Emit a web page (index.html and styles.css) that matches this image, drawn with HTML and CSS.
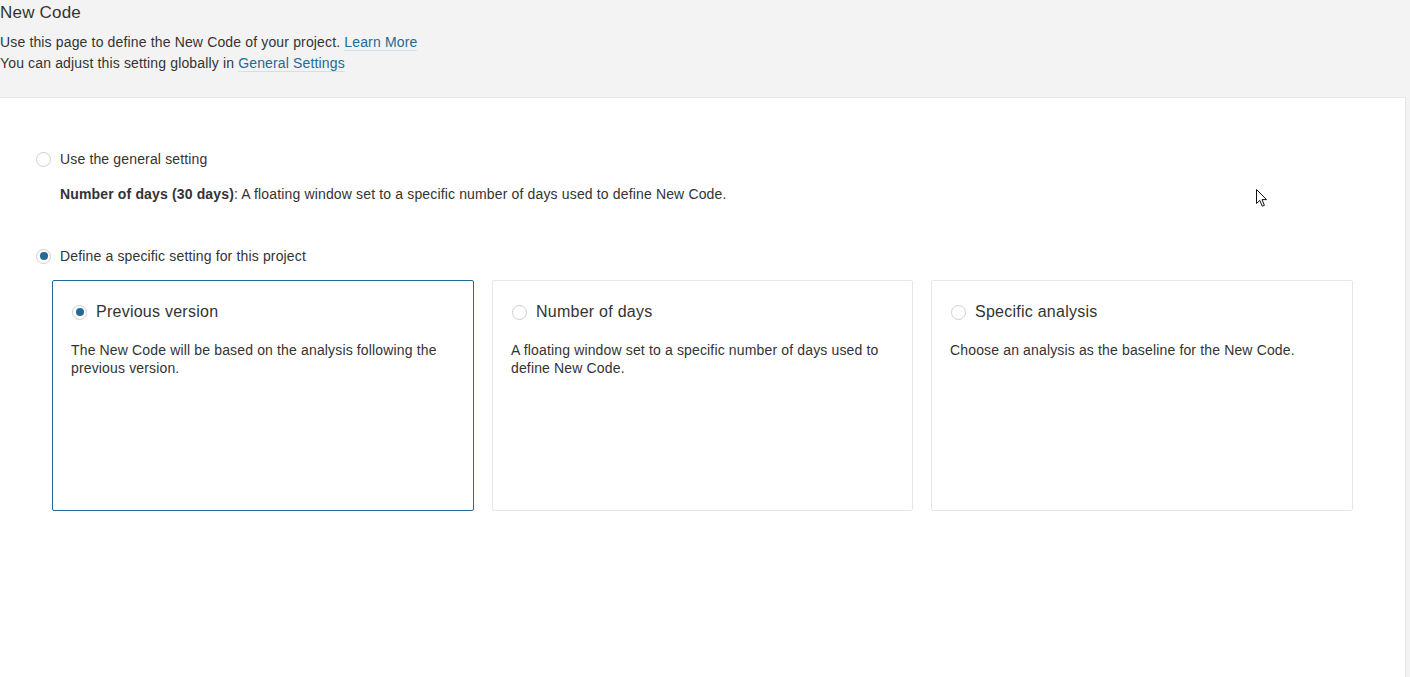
FILE: index.html
```
<!DOCTYPE html>
<html lang="en">

<head>
	<meta charset="utf-8">
	<title>New Code</title>
	<link rel="stylesheet" href="styles.css">
</head>

<body>

	<header class="page-header">
		<h1 class="page-title">New Code</h1>
		<div class="page-description">
			<p>Use this page to define the New Code of your project. <a href="#">Learn More</a></p>
			<p>You can adjust this setting globally in <a href="#">General Settings</a></p>
		</div>
	</header>

	<div class="boxed-group">

		<div class="radio-row">
			<span class="radio"></span>
			<span>Use the general setting</span>
		</div>
		<p class="general-desc"><strong>Number of days (30 days)</strong>: A floating window set to a specific number of days used to define New Code.</p>

		<div class="radio-row specific-row">
			<span class="radio checked"></span>
			<span>Define a specific setting for this project</span>
		</div>

		<div class="choices">
			<div class="choice selected">
				<div class="choice-title">
					<span class="radio checked"></span>
					<span>Previous version</span>
				</div>
				<p>The New Code will be based on the analysis following the previous version.</p>
			</div>
			<div class="choice">
				<div class="choice-title">
					<span class="radio"></span>
					<span>Number of days</span>
				</div>
				<p>A floating window set to a specific number of days used to define New Code.</p>
			</div>
			<div class="choice">
				<div class="choice-title">
					<span class="radio"></span>
					<span>Specific analysis</span>
				</div>
				<p>Choose an analysis as the baseline for the New Code.</p>
			</div>
		</div>

	</div>

	<svg class="cursor" width="13" height="20" viewBox="0 0 13 20">
		<path d="M1.5 1.5 L1.5 15.5 L4.8 12.4 L7.3 18.2 L9.4 17.3 L7 11.6 L11.5 11.6 Z" fill="#fff" stroke="#111" stroke-width="1" stroke-linejoin="miter"/>
	</svg>

</body>
</html>
```

FILE: styles.css
```
html,
body {
	height: 100%;
}

body {
	margin: 0;
	font-family: "Liberation Sans", Arial, sans-serif;
	font-size: 14px;
	letter-spacing: 0.15px;
	color: #333;
	background: #f3f3f3;
	display: flex;
	flex-direction: column;
}

p {
	margin: 0;
}

a {
	color: #236a97;
	text-decoration: none;
	border-bottom: 1px solid #cae3f2;
}

.page-header {
	height: 97px;
	box-sizing: border-box;
	padding-top: 2px;
}

.page-title {
	margin: 0;
	font-size: 17px;
	font-weight: 400;
	letter-spacing: 0.2px;
	line-height: 22px;
}

.page-description {
	margin-top: 8px;
	line-height: 21px;
}

.boxed-group {
	flex: 1;
	width: 1406px;
	box-sizing: border-box;
	background: #fff;
	border-top: 1px solid #e6e6e6;
	border-right: 1px solid #e6e6e6;
	padding: 52px 20px 0 36px;
}

.radio-row {
	display: flex;
	align-items: center;
	gap: 9px;
	line-height: 18px;
}

.radio {
	flex: none;
	width: 15px;
	height: 15px;
	box-sizing: border-box;
	border: 1px solid #cfcfcf;
	border-radius: 50%;
	background: #fff;
	display: inline-flex;
	align-items: center;
	justify-content: center;
}

.radio.checked::after {
	content: "";
	width: 8px;
	height: 8px;
	border-radius: 50%;
	background: #236a97;
}

.general-desc {
	margin: 17px 0 0 24px;
	line-height: 18px;
}

.specific-row {
	margin-top: 44px;
}

.choices {
	display: grid;
	grid-template-columns: 422px 421px 422px;
	gap: 18px;
	margin: 15px 0 0 16px;
}

.choice {
	height: 231px;
	box-sizing: border-box;
	border: 1px solid #e6e6e6;
	border-radius: 2px;
	padding: 19px 18px 0;
}

.choice.selected {
	border-color: #236a97;
}

.choice-title {
	display: flex;
	align-items: center;
	gap: 9px;
	font-size: 16px;
	letter-spacing: 0.25px;
	line-height: 24px;
	padding-left: 1px;
}

.choice p {
	margin-top: 17px;
	line-height: 18px;
}

.cursor {
	position: absolute;
	left: 1255px;
	top: 188px;
}
```
